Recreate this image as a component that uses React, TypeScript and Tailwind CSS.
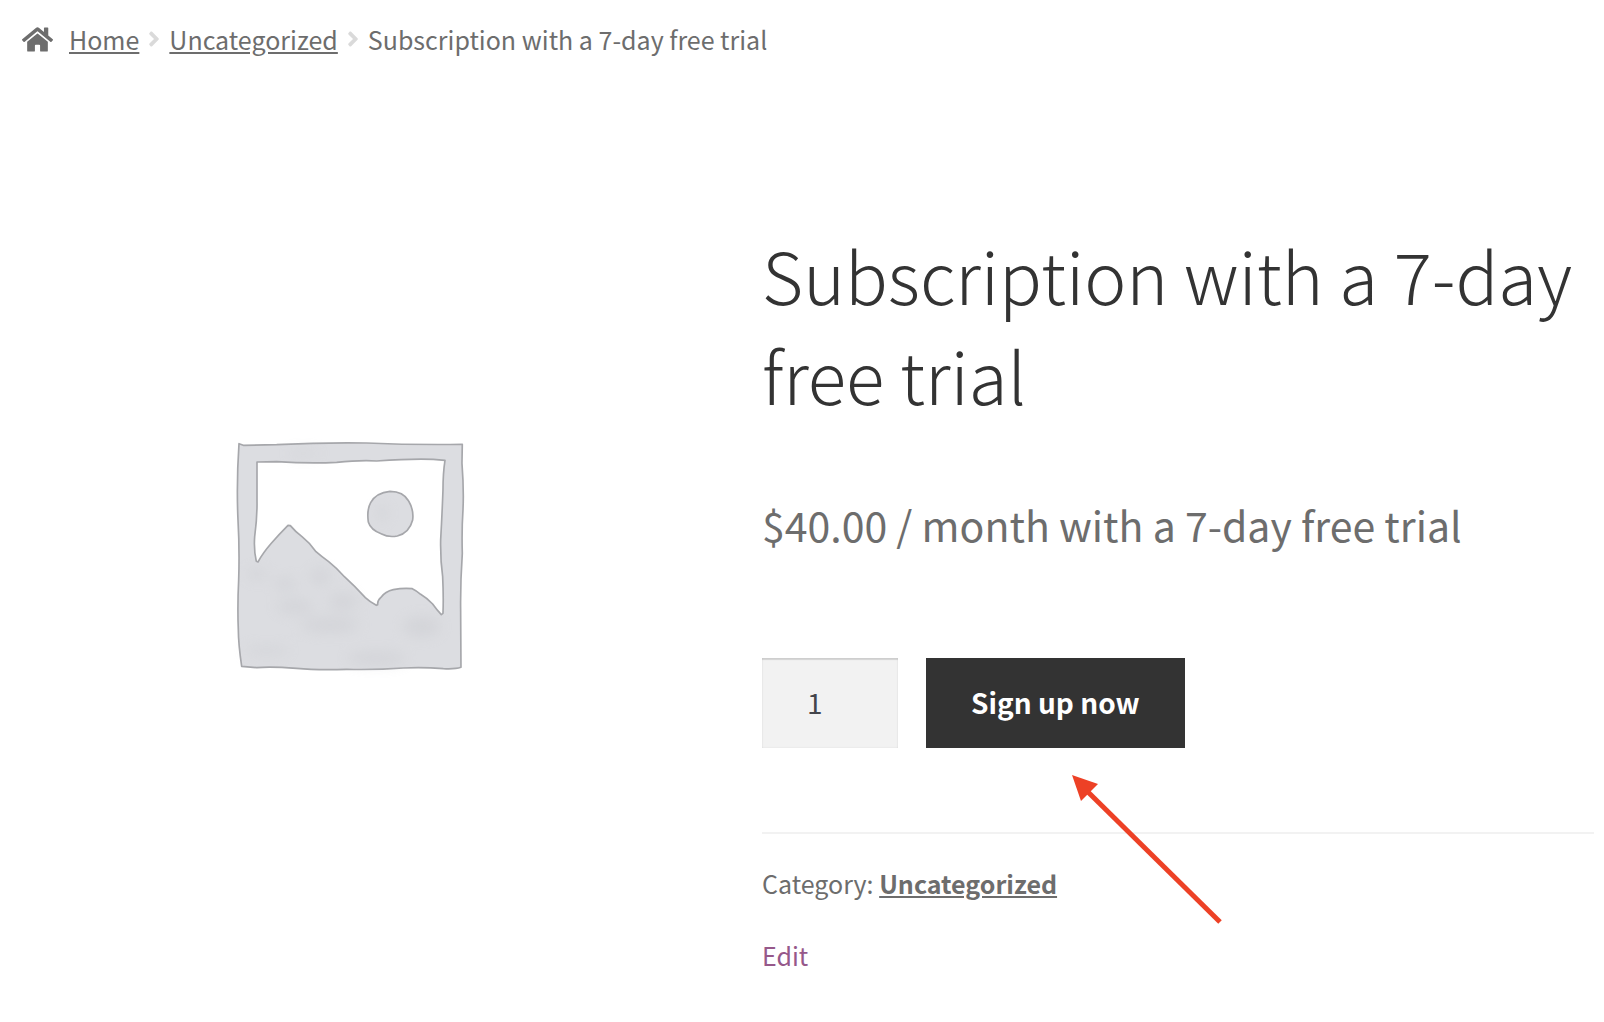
import { FaAngleRight, FaHome } from "react-icons/fa";

function PlaceholderImage() {
  return (
    <svg
      viewBox="0 0 656 656"
      className="w-full"
      role="img"
      aria-label="Awaiting product image"
    >
      <defs>
        <filter id="soften" x="-50%" y="-50%" width="200%" height="200%">
          <feGaussianBlur stdDeviation="20" />
        </filter>
      </defs>
      <g
        transform="translate(198 201) scale(0.3333)"
        stroke="#a6a7ab"
        strokeWidth="5"
        strokeLinejoin="round"
      >
        {/* Frame and hills */}
        <path
          fill="#dcdde1"
          fillRule="evenodd"
          d="M57 41 L70 46 L170 44 Q310 37 440 39 Q580 45 727 43 L726 100 Q732 180 729 240 Q725 300 727 370 Q721 460 722 540 L723 712 Q705 718 670 716 Q610 711 550 714 Q470 720 380 718 Q290 721 230 715 Q150 709 110 713 L65 709 Q55 640 55 600 Q52 530 56 450 Q59 360 54 270 Q49 160 57 41 Z
             M111 96 L170 95 Q270 101 350 97 Q420 90 470 93 Q580 85 640 88 L675 91 Q669 130 669 180 Q666 260 662 330 Q661 390 668 440 Q671 500 669 550 L664 554 Q650 539 638 522 Q619 503 602 493 Q588 481 577 476 Q550 473 520 479 Q496 484 482 503 Q472 512 473 524 L469 526 Q450 516 436 503 Q406 470 374 441 Q350 414 326 395 Q304 379 288 365 Q270 339 246 320 Q226 305 211 287 L204 286 Q176 314 154 340 Q128 370 114 396 L109 394 Q101 360 104 320 Q112 260 111 210 Z"
        />
        {/* Sun */}
        <path
          fill="#dcdde1"
          d="M510 184 Q550 184 566 213 Q582 240 578 270 Q568 309 532 318 Q505 323 485 312 Q452 300 445 276 Q440 240 452 218 Q468 188 510 184 Z"
        />
        {/* Watercolour shading */}
        <g fill="#c6c7cc" stroke="none" opacity="0.4" filter="url(#soften)">
          <ellipse cx="225" cy="530" rx="56" ry="20" />
          <ellipse cx="370" cy="515" rx="44" ry="24" />
          <ellipse cx="330" cy="585" rx="90" ry="22" />
          <ellipse cx="605" cy="590" rx="56" ry="30" />
          <ellipse cx="110" cy="432" rx="30" ry="16" />
          <ellipse cx="470" cy="685" rx="90" ry="20" />
          <ellipse cx="140" cy="662" rx="70" ry="12" />
          <ellipse cx="195" cy="462" rx="34" ry="18" />
          <ellipse cx="300" cy="440" rx="30" ry="24" />
          <ellipse cx="250" cy="70" rx="50" ry="8" />
          <ellipse cx="486" cy="250" rx="16" ry="24" />
        </g>
      </g>
    </svg>
  );
}

function Arrow() {
  return (
    <svg
      viewBox="0 0 152 150"
      className="pointer-events-none absolute left-[146px] top-[117px] h-[150px] w-[152px]"
      aria-hidden="true"
    >
      <path d="M16 17 L148 147" stroke="#ed4126" strokeWidth="5" />
      <path d="M0 0 L26 9 L9 26 Z" fill="#ed4126" />
    </svg>
  );
}

export default function App() {
  return (
    <div className="min-h-screen bg-white pb-8 pl-[22px] pr-[10px] font-['Noto_Sans_CJK_SC',sans-serif] text-[25px] leading-[44px] text-[#6d6d6d]">
      <nav aria-label="Breadcrumb" className="flex items-center pt-[17px]">
        <FaHome className="mr-4 size-[31px]" />
        <a href="#home" className="underline">
          Home
        </a>
        <FaAngleRight className="mx-[3px] size-6 text-[#dadada]" />
        <a href="#uncategorized" className="underline">
          Uncategorized
        </a>
        <FaAngleRight className="mx-[3px] size-6 text-[#dadada]" />
        <span>Subscription with a 7-day free trial</span>
      </nav>

      <main className="mt-[163px] grid grid-cols-[41fr_52fr] gap-[84px]">
        <div className="pt-[5px]">
          <PlaceholderImage />
        </div>

        <section>
          <h1 className="text-[71px] font-light leading-[100px] text-[#333333]">
            Subscription with a 7-day free trial
          </h1>
          <p className="mt-[66px] text-[41px] leading-[68px]">
            $40.00 / month with a 7-day free trial
          </p>

          <form
            className="mt-[100px] flex gap-7"
            onSubmit={(e) => e.preventDefault()}
          >
            <input
              type="text"
              inputMode="numeric"
              aria-label="Product quantity"
              defaultValue="1"
              className="h-[90px] w-[136px] bg-[#f2f2f2] pb-0.5 pl-[45px] pr-4 text-[28px] text-[#43454b] shadow-[inset_0_2px_1px_rgba(0,0,0,0.125),inset_0_0_2px_rgba(0,0,0,0.1)]"
            />
            <div className="relative">
              <button
                type="submit"
                className="h-[90px] bg-[#333333] px-[45px] pb-0.5 text-[28px] font-bold text-white"
              >
                Sign up now
              </button>
              <Arrow />
            </div>
          </form>

          <div className="mt-[84px] border-t-2 border-[#f2f2f2] pt-[27px]">
            <p>
              Category:{" "}
              <a href="#uncategorized" className="font-bold underline">
                Uncategorized
              </a>
            </p>
          </div>
          <p className="mt-7">
            <a href="#edit" className="text-[#96588a]">
              Edit
            </a>
          </p>
        </section>
      </main>
    </div>
  );
}
